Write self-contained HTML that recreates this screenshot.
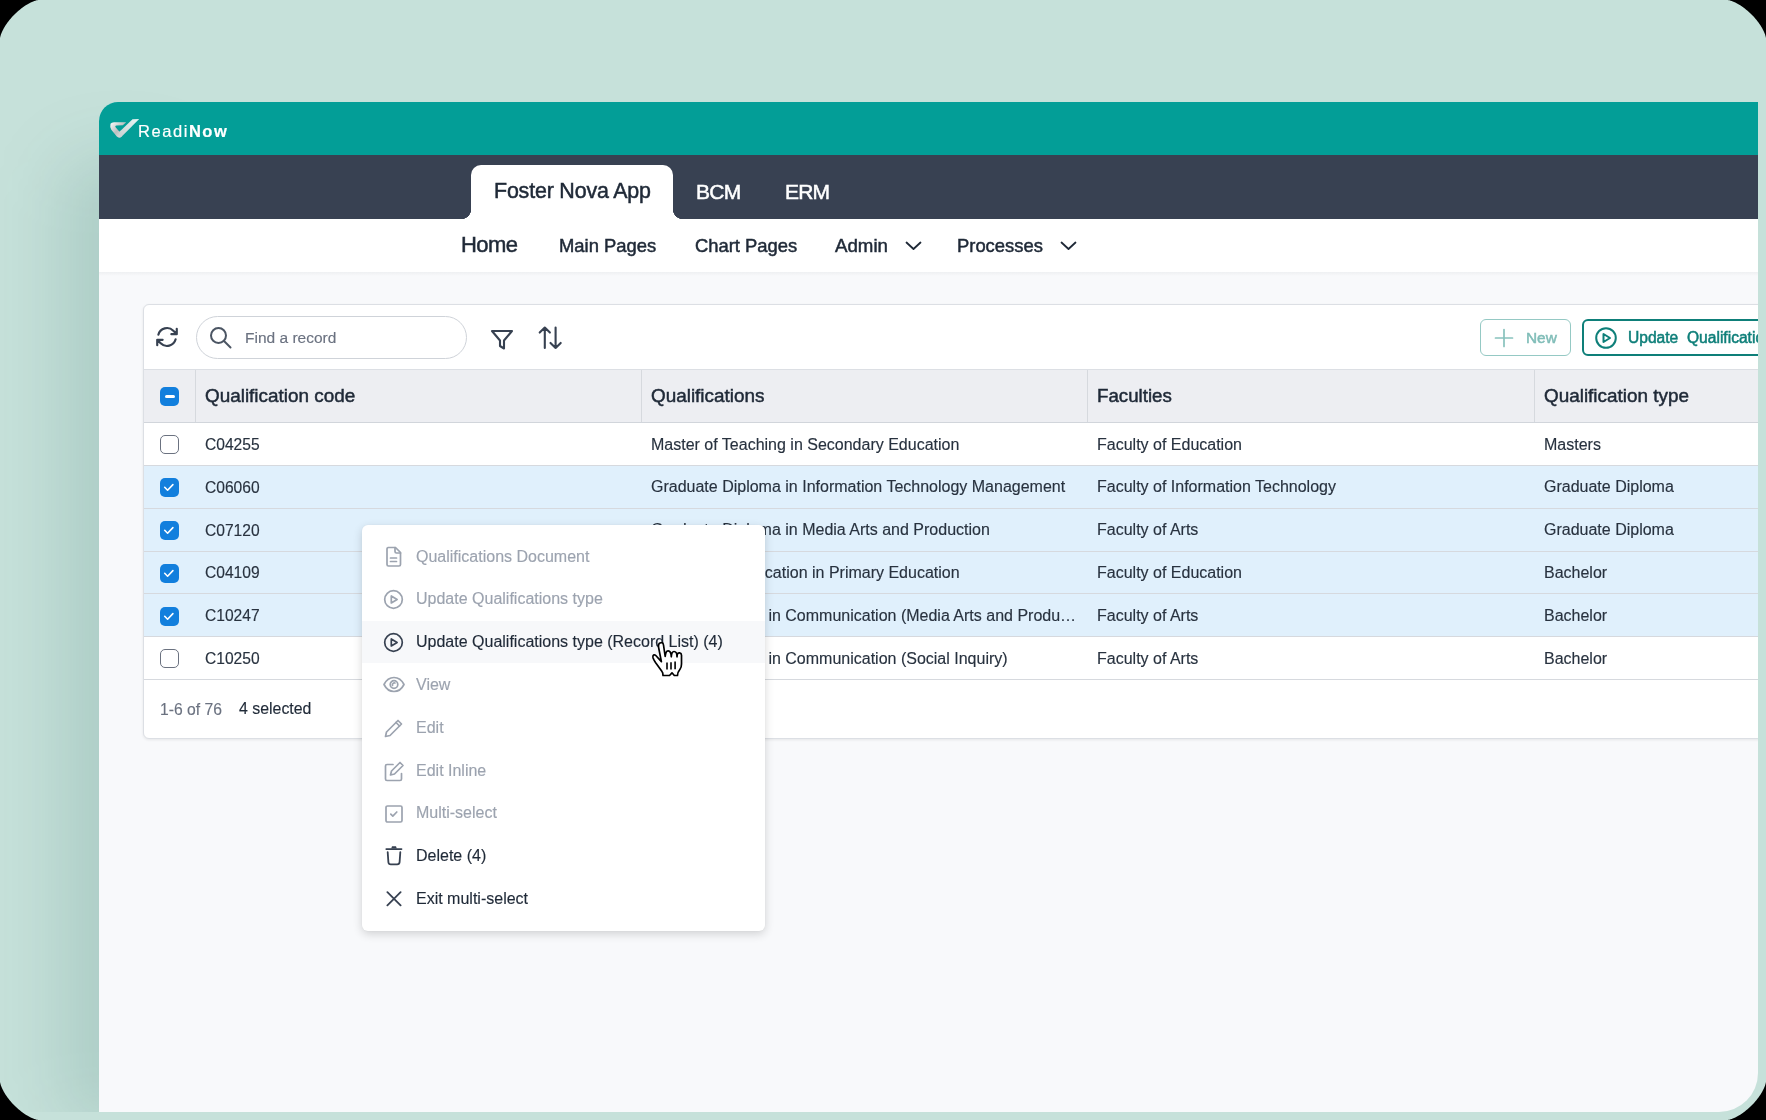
<!DOCTYPE html><html><head><meta charset="utf-8"><style>
html,body{margin:0;padding:0}
body{width:1766px;height:1120px;background:#000;overflow:hidden;position:relative;font-family:"Liberation Sans",sans-serif}
.frame{position:absolute;left:0;top:0;width:1766px;height:1120px;background:#c6e1da;overflow:hidden}
.win{position:absolute;left:99px;top:102px;width:1659px;height:1010px;border-radius:19px 0 39px 0;overflow:hidden;background:#f8f9fb;}
.pg{position:absolute;left:-99px;top:-102px;width:1766px;height:1120px}
.a{position:absolute}
.t{position:absolute;white-space:nowrap;will-change:transform}
</style></head><body><div class="frame"><div class="a" style="left:0;top:0;width:300px;height:1112px;overflow:hidden"><div class="a" style="left:62px;top:160px;width:120px;height:965px;border-radius:30px;background:rgba(0,70,60,.13);filter:blur(36px)"></div></div><div class="win"><div class="pg">

<div class="a" style="left:99px;top:102px;width:1659px;height:53px;background:#039e97"></div>
<svg class="a" style="left:109px;top:118px;" width="31" height="21" viewBox="0 0 31 21"><defs><linearGradient id="lg" x1="0" y1="0" x2="1" y2="1"><stop offset="0" stop-color="#ffffff"/><stop offset=".5" stop-color="#b9bfbf"/><stop offset="1" stop-color="#f2f2f2"/></linearGradient><linearGradient id="lg2" x1="0" y1="1" x2="1" y2="0"><stop offset="0" stop-color="#c9d0d0"/><stop offset="1" stop-color="#e6f6f5"/></linearGradient></defs>
<path d="M1.5 5.8 Q2.5 4.3 5 4.2 L17.2 4.2 L13.8 7.2 L7.5 7.4 Q5.5 7.6 6.8 9.5 L10.5 13.8 L12 12.4 L12.5 18.8 Q10 20.8 7.8 18.6 L2.3 11.8 Q0.6 9.5 1.5 5.8 Z" fill="url(#lg)"/>
<path d="M10.5 13.8 L23.5 1.2 L30.2 1 L12.5 18.8 Q11 19.6 10.2 18.5 Z" fill="url(#lg2)"/></svg>
<div class="t" style="left:138.00px;top:122.63px;font-size:16.5px;line-height:16.5px;color:#ffffff;font-weight:400;letter-spacing:1.55px;-webkit-text-stroke:0.2px #fff">Readi<b style="font-weight:700">Now</b></div>
<div class="a" style="left:99px;top:155px;width:1659px;height:64px;background:#384152"></div>
<div class="a" style="left:471px;top:165px;width:202px;height:54px;background:#fff;border-radius:10px 10px 0 0"></div>
<div class="a" style="left:461px;top:209px;width:10px;height:10px;background:radial-gradient(circle at 0 0, #384152 10px, #fff 10.5px)"></div>
<div class="a" style="left:673px;top:209px;width:10px;height:10px;background:radial-gradient(circle at 100% 0, #384152 10px, #fff 10.5px)"></div>
<div class="t" style="left:493.50px;top:180.88px;font-size:21.4px;line-height:21.4px;color:#1f2937;font-weight:400;-webkit-text-stroke:0.5px currentColor;letter-spacing:-0.17px;">Foster Nova App</div>
<div class="t" style="left:695.60px;top:181.22px;font-size:21px;line-height:21px;color:#fff;font-weight:400;-webkit-text-stroke:0.5px currentColor;letter-spacing:-0.7px;">BCM</div>
<div class="t" style="left:784.90px;top:181.22px;font-size:21px;line-height:21px;color:#fff;font-weight:400;-webkit-text-stroke:0.5px currentColor;letter-spacing:-0.8px;">ERM</div>
<div class="a" style="left:99px;top:219px;width:1659px;height:53px;background:#fff"></div>
<div class="a" style="left:99px;top:272px;width:1659px;height:4px;background:linear-gradient(#eef0f2,#f8f9fb)"></div>
<div class="t" style="left:461.00px;top:233.88px;font-size:22px;line-height:22px;color:#1f2937;font-weight:400;-webkit-text-stroke:0.5px currentColor;letter-spacing:-0.6px;">Home</div>
<div class="t" style="left:559.00px;top:236.92px;font-size:18.4px;line-height:18.4px;color:#1f2937;font-weight:400;-webkit-text-stroke:0.5px currentColor;">Main Pages</div>
<div class="t" style="left:694.60px;top:236.92px;font-size:18.4px;line-height:18.4px;color:#1f2937;font-weight:400;-webkit-text-stroke:0.5px currentColor;">Chart Pages</div>
<div class="t" style="left:835.30px;top:236.67px;font-size:18.7px;line-height:18.7px;color:#1f2937;font-weight:400;-webkit-text-stroke:0.5px currentColor;">Admin</div>
<div class="t" style="left:957.30px;top:236.92px;font-size:18.4px;line-height:18.4px;color:#1f2937;font-weight:400;-webkit-text-stroke:0.5px currentColor;">Processes</div>
<svg class="a" style="left:905px;top:241px;" width="17" height="10" viewBox="0 0 17 10"><path d="M1.5 1.5 L8.5 8 L15.5 1.5" fill="none" stroke="#1f2937" stroke-width="1.8" stroke-linecap="round" stroke-linejoin="round"/></svg>
<svg class="a" style="left:1060px;top:241px;" width="17" height="10" viewBox="0 0 17 10"><path d="M1.5 1.5 L8.5 8 L15.5 1.5" fill="none" stroke="#1f2937" stroke-width="1.8" stroke-linecap="round" stroke-linejoin="round"/></svg>
<div class="a" style="left:143px;top:304px;width:1757px;height:435px;background:#fff;border:1px solid #dcdfe4;border-radius:6px;box-sizing:border-box;box-shadow:0 1px 3px rgba(0,0,0,.08)"></div>
<svg class="a" style="left:154.2px;top:324.4px;" width="26" height="26" viewBox="0 0 24 24"><path d="M16.023 9.348h4.992v-.001M2.985 19.644v-4.992m0 0h4.992m-4.993 0 3.181 3.183a8.25 8.25 0 0 0 13.803-3.7M4.031 9.865a8.25 8.25 0 0 1 13.803-3.7l3.181 3.182m0-4.991v4.99" fill="none" stroke="#374151" stroke-width="2" stroke-linecap="round" stroke-linejoin="round"/></svg>
<div class="a" style="left:196px;top:316px;width:271px;height:43px;border:1.2px solid #cfd3d9;border-radius:22px;box-sizing:border-box;background:#fff"></div>
<svg class="a" style="left:208px;top:325px;" width="26" height="26" viewBox="0 0 26 26"><g fill="none" stroke="#4b5563" stroke-width="2" stroke-linecap="round"><circle cx="10.5" cy="10.5" r="7.5"/><path d="M16 16l6.5 6.5"/></g></svg>
<div class="t" style="left:245.30px;top:329.88px;font-size:15.5px;line-height:15.5px;color:#6b7280;font-weight:400;-webkit-text-stroke:0.15px currentColor;">Find a record</div>
<svg class="a" style="left:489px;top:328.6px;" width="26" height="22" viewBox="0 0 26 22"><path d="M3 2h20l-8 9.5v8l-4 -2.5v-5.5z" fill="none" stroke="#374151" stroke-width="2.1" stroke-linecap="round" stroke-linejoin="round"/></svg>
<svg class="a" style="left:537px;top:325px;" width="27" height="25" viewBox="0 0 27 25"><g fill="none" stroke="#374151" stroke-width="2.1" stroke-linecap="round" stroke-linejoin="round"><path d="M7.8 23V2.5M2.7 7.6L7.8 2.5l5.1 5.1M18.6 2.5V23M13.5 17.9l5.1 5.1 5.1-5.1"/></g></svg>
<div class="a" style="left:1480px;top:319px;width:91px;height:37px;border:1.5px solid #95c9c4;border-radius:6px;box-sizing:border-box"></div>
<svg class="a" style="left:1493px;top:327px;" width="22" height="22" viewBox="0 0 22 22"><path d="M11 2.5v17M2.5 11h17" stroke="#88c2bd" stroke-width="1.7" stroke-linecap="round"/></svg>
<div class="t" style="left:1526.20px;top:329.56px;font-size:15.4px;line-height:15.4px;color:#80bdb8;font-weight:400;-webkit-text-stroke:0.5px currentColor;">New</div>
<div class="a" style="left:1582px;top:319px;width:218px;height:37px;border:2px solid #0e7f79;border-radius:6px;box-sizing:border-box"></div>
<svg class="a" style="left:1594px;top:326px;" width="24" height="24" viewBox="0 0 24 24"><g fill="none" stroke="#0e7f79" stroke-width="2" stroke-linejoin="round"><circle cx="12" cy="12" r="9.8"/><path d="M9.5 8v8l6.5-4z"/></g></svg>
<div class="t" style="left:1628.40px;top:329.79px;font-size:15.6px;line-height:15.6px;color:#0e7f79;font-weight:400;-webkit-text-stroke:0.5px currentColor;">Update&nbsp; Qualifications type</div>
<div class="a" style="left:144px;top:369px;width:1614px;height:54px;background:#edeef2;border-top:1px solid #dcdfe4;border-bottom:1px solid #d1d5db;box-sizing:border-box"></div>
<div class="a" style="left:195px;top:370px;width:1px;height:52px;background:#d6d9de"></div>
<div class="a" style="left:641px;top:370px;width:1px;height:52px;background:#d6d9de"></div>
<div class="a" style="left:1087px;top:370px;width:1px;height:52px;background:#d6d9de"></div>
<div class="a" style="left:1534px;top:370px;width:1px;height:52px;background:#d6d9de"></div>
<div class="a" style="left:160px;top:387px;width:19px;height:19px;border-radius:5px;background:#127fdd"></div>
<div class="a" style="left:164.5px;top:395px;width:10.0px;height:3px;background:#fff;border-radius:2px"></div>
<div class="t" style="left:204.50px;top:386.60px;font-size:18.9px;line-height:18.9px;color:#1f2937;font-weight:400;-webkit-text-stroke:0.5px currentColor;">Qualification code</div>
<div class="t" style="left:650.90px;top:386.60px;font-size:18.9px;line-height:18.9px;color:#1f2937;font-weight:400;-webkit-text-stroke:0.5px currentColor;">Qualifications</div>
<div class="t" style="left:1097.20px;top:386.77px;font-size:18.7px;line-height:18.7px;color:#1f2937;font-weight:400;-webkit-text-stroke:0.5px currentColor;">Faculties</div>
<div class="t" style="left:1543.70px;top:386.60px;font-size:18.9px;line-height:18.9px;color:#1f2937;font-weight:400;-webkit-text-stroke:0.5px currentColor;">Qualification type</div>
<div class="a" style="left:144px;top:423px;width:1614px;height:43px;background:#fff;border-bottom:1px solid #d6d9de;box-sizing:border-box"></div>
<div class="a" style="left:160px;top:435.3px;width:19px;height:19px;border-radius:5px;border:1.8px solid #6b7280;box-sizing:border-box;background:#fff"></div>
<div class="t" style="left:204.50px;top:436.99px;font-size:15.6px;line-height:15.6px;color:#28323f;font-weight:400;-webkit-text-stroke:0.15px currentColor;">C04255</div>
<div class="t" style="left:650.90px;top:436.66px;font-size:16px;line-height:16px;color:#28323f;font-weight:400;-webkit-text-stroke:0.15px currentColor;">Master of Teaching in Secondary Education</div>
<div class="t" style="left:1097.20px;top:436.66px;font-size:16px;line-height:16px;color:#28323f;font-weight:400;-webkit-text-stroke:0.15px currentColor;">Faculty of Education</div>
<div class="t" style="left:1543.70px;top:436.66px;font-size:16px;line-height:16px;color:#28323f;font-weight:400;-webkit-text-stroke:0.15px currentColor;">Masters</div>
<div class="a" style="left:144px;top:466px;width:1614px;height:43px;background:#e0f0fc;border-bottom:1px solid #d6d9de;box-sizing:border-box"></div>
<div class="a" style="left:160px;top:478.1px;width:19px;height:19px;border-radius:5px;background:#127fdd"></div>
<svg class="a" style="left:160px;top:478.1px;" width="19" height="19" viewBox="0 0 19 19"><path d="M4.7 9.3L7.6 12.2L12.9 6.6" fill="none" stroke="#fff" stroke-width="1.6" stroke-linecap="round" stroke-linejoin="round"/></svg>
<div class="t" style="left:204.50px;top:479.79px;font-size:15.6px;line-height:15.6px;color:#28323f;font-weight:400;-webkit-text-stroke:0.15px currentColor;">C06060</div>
<div class="t" style="left:650.90px;top:479.46px;font-size:16px;line-height:16px;color:#28323f;font-weight:400;-webkit-text-stroke:0.15px currentColor;">Graduate Diploma in Information Technology Management</div>
<div class="t" style="left:1097.20px;top:479.46px;font-size:16px;line-height:16px;color:#28323f;font-weight:400;-webkit-text-stroke:0.15px currentColor;">Faculty of Information Technology</div>
<div class="t" style="left:1543.70px;top:479.46px;font-size:16px;line-height:16px;color:#28323f;font-weight:400;-webkit-text-stroke:0.15px currentColor;">Graduate Diploma</div>
<div class="a" style="left:144px;top:509px;width:1614px;height:43px;background:#e0f0fc;border-bottom:1px solid #d6d9de;box-sizing:border-box"></div>
<div class="a" style="left:160px;top:520.9px;width:19px;height:19px;border-radius:5px;background:#127fdd"></div>
<svg class="a" style="left:160px;top:520.9px;" width="19" height="19" viewBox="0 0 19 19"><path d="M4.7 9.3L7.6 12.2L12.9 6.6" fill="none" stroke="#fff" stroke-width="1.6" stroke-linecap="round" stroke-linejoin="round"/></svg>
<div class="t" style="left:204.50px;top:522.59px;font-size:15.6px;line-height:15.6px;color:#28323f;font-weight:400;-webkit-text-stroke:0.15px currentColor;">C07120</div>
<div class="t" style="left:650.90px;top:522.26px;font-size:16px;line-height:16px;color:#28323f;font-weight:400;-webkit-text-stroke:0.15px currentColor;">Graduate Diploma in Media Arts and Production</div>
<div class="t" style="left:1097.20px;top:522.26px;font-size:16px;line-height:16px;color:#28323f;font-weight:400;-webkit-text-stroke:0.15px currentColor;">Faculty of Arts</div>
<div class="t" style="left:1543.70px;top:522.26px;font-size:16px;line-height:16px;color:#28323f;font-weight:400;-webkit-text-stroke:0.15px currentColor;">Graduate Diploma</div>
<div class="a" style="left:144px;top:552px;width:1614px;height:42px;background:#e0f0fc;border-bottom:1px solid #d6d9de;box-sizing:border-box"></div>
<div class="a" style="left:160px;top:563.7px;width:19px;height:19px;border-radius:5px;background:#127fdd"></div>
<svg class="a" style="left:160px;top:563.7px;" width="19" height="19" viewBox="0 0 19 19"><path d="M4.7 9.3L7.6 12.2L12.9 6.6" fill="none" stroke="#fff" stroke-width="1.6" stroke-linecap="round" stroke-linejoin="round"/></svg>
<div class="t" style="left:204.50px;top:565.39px;font-size:15.6px;line-height:15.6px;color:#28323f;font-weight:400;-webkit-text-stroke:0.15px currentColor;">C04109</div>
<div class="t" style="left:650.90px;top:565.06px;font-size:16px;line-height:16px;color:#28323f;font-weight:400;-webkit-text-stroke:0.15px currentColor;">Bachelor of Education in Primary Education</div>
<div class="t" style="left:1097.20px;top:565.06px;font-size:16px;line-height:16px;color:#28323f;font-weight:400;-webkit-text-stroke:0.15px currentColor;">Faculty of Education</div>
<div class="t" style="left:1543.70px;top:565.06px;font-size:16px;line-height:16px;color:#28323f;font-weight:400;-webkit-text-stroke:0.15px currentColor;">Bachelor</div>
<div class="a" style="left:144px;top:594px;width:1614px;height:43px;background:#e0f0fc;border-bottom:1px solid #d6d9de;box-sizing:border-box"></div>
<div class="a" style="left:160px;top:606.5px;width:19px;height:19px;border-radius:5px;background:#127fdd"></div>
<svg class="a" style="left:160px;top:606.5px;" width="19" height="19" viewBox="0 0 19 19"><path d="M4.7 9.3L7.6 12.2L12.9 6.6" fill="none" stroke="#fff" stroke-width="1.6" stroke-linecap="round" stroke-linejoin="round"/></svg>
<div class="t" style="left:204.50px;top:608.19px;font-size:15.6px;line-height:15.6px;color:#28323f;font-weight:400;-webkit-text-stroke:0.15px currentColor;">C10247</div>
<div class="t" style="left:650.90px;top:607.86px;font-size:16px;line-height:16px;color:#28323f;font-weight:400;-webkit-text-stroke:0.15px currentColor;">Bachelor of Arts in Communication (Media Arts and Produ…</div>
<div class="t" style="left:1097.20px;top:607.86px;font-size:16px;line-height:16px;color:#28323f;font-weight:400;-webkit-text-stroke:0.15px currentColor;">Faculty of Arts</div>
<div class="t" style="left:1543.70px;top:607.86px;font-size:16px;line-height:16px;color:#28323f;font-weight:400;-webkit-text-stroke:0.15px currentColor;">Bachelor</div>
<div class="a" style="left:144px;top:637px;width:1614px;height:43px;background:#fff;border-bottom:1px solid #d6d9de;box-sizing:border-box"></div>
<div class="a" style="left:160px;top:649.3px;width:19px;height:19px;border-radius:5px;border:1.8px solid #6b7280;box-sizing:border-box;background:#fff"></div>
<div class="t" style="left:204.50px;top:650.99px;font-size:15.6px;line-height:15.6px;color:#28323f;font-weight:400;-webkit-text-stroke:0.15px currentColor;">C10250</div>
<div class="t" style="left:650.90px;top:650.66px;font-size:16px;line-height:16px;color:#28323f;font-weight:400;-webkit-text-stroke:0.15px currentColor;">Bachelor of Arts in Communication (Social Inquiry)</div>
<div class="t" style="left:1097.20px;top:650.66px;font-size:16px;line-height:16px;color:#28323f;font-weight:400;-webkit-text-stroke:0.15px currentColor;">Faculty of Arts</div>
<div class="t" style="left:1543.70px;top:650.66px;font-size:16px;line-height:16px;color:#28323f;font-weight:400;-webkit-text-stroke:0.15px currentColor;">Bachelor</div>
<div class="t" style="left:159.50px;top:701.61px;font-size:15.7px;line-height:15.7px;color:#6b7280;font-weight:400;-webkit-text-stroke:0.15px currentColor;">1-6 of 76</div>
<div class="t" style="left:239.20px;top:701.44px;font-size:15.9px;line-height:15.9px;color:#1f2937;font-weight:400;-webkit-text-stroke:0.15px currentColor;">4 selected</div>
<div class="a" style="left:362px;top:525px;width:403px;height:406px;background:#fff;border-radius:6px;box-shadow:0 3px 10px rgba(0,0,0,.16), 0 0 2px rgba(0,0,0,.06)"></div>
<div class="a" style="left:362px;top:621px;width:403px;height:42px;background:#f7f8fa"></div>
<div class="t" style="left:415.70px;top:548.66px;font-size:16px;line-height:16px;color:#9ca3af;font-weight:400;-webkit-text-stroke:0.15px currentColor;">Qualifications Document</div>
<div class="t" style="left:415.70px;top:591.43px;font-size:16px;line-height:16px;color:#9ca3af;font-weight:400;-webkit-text-stroke:0.15px currentColor;">Update Qualifications type</div>
<div class="t" style="left:415.70px;top:634.20px;font-size:16px;line-height:16px;color:#1f2937;font-weight:400;-webkit-text-stroke:0.15px currentColor;">Update Qualifications type (Record List) (4)</div>
<div class="t" style="left:415.70px;top:676.97px;font-size:16px;line-height:16px;color:#9ca3af;font-weight:400;-webkit-text-stroke:0.15px currentColor;">View</div>
<div class="t" style="left:415.70px;top:719.74px;font-size:16px;line-height:16px;color:#9ca3af;font-weight:400;-webkit-text-stroke:0.15px currentColor;">Edit</div>
<div class="t" style="left:415.70px;top:762.51px;font-size:16px;line-height:16px;color:#9ca3af;font-weight:400;-webkit-text-stroke:0.15px currentColor;">Edit Inline</div>
<div class="t" style="left:415.70px;top:805.28px;font-size:16px;line-height:16px;color:#9ca3af;font-weight:400;-webkit-text-stroke:0.15px currentColor;">Multi-select</div>
<div class="t" style="left:415.70px;top:848.05px;font-size:16px;line-height:16px;color:#1f2937;font-weight:400;-webkit-text-stroke:0.15px currentColor;">Delete (4)</div>
<div class="t" style="left:415.70px;top:890.82px;font-size:16px;line-height:16px;color:#1f2937;font-weight:400;-webkit-text-stroke:0.15px currentColor;">Exit multi-select</div>
<svg class="a" style="left:384px;top:545px;" width="20" height="23" viewBox="0 0 20 23"><g fill="none" stroke="#9ca3af" stroke-width="1.7" stroke-linecap="round" stroke-linejoin="round"><path d="M4 2.5h7.5l5 5v12a1.5 1.5 0 0 1-1.5 1.5H4.5A1.5 1.5 0 0 1 3 19.5v-15.5A1.5 1.5 0 0 1 4.5 2.5z"/><path d="M11 2.5v4a1.5 1.5 0 0 0 1.5 1.5h4M6.5 13h6M6.5 16.5h6"/></g></svg>
<svg class="a" style="left:383px;top:588.5px;" width="21" height="21" viewBox="0 0 21 21"><g fill="none" stroke="#9ca3af" stroke-width="1.7" stroke-linecap="round" stroke-linejoin="round"><circle cx="10.5" cy="10.5" r="8.8"/><path d="M8.3 7v7l5.8-3.5z"/></g></svg>
<svg class="a" style="left:383px;top:631.5px;" width="21" height="21" viewBox="0 0 21 21"><g fill="none" stroke="#374151" stroke-width="1.7" stroke-linecap="round" stroke-linejoin="round"><circle cx="10.5" cy="10.5" r="8.8"/><path d="M8.3 7v7l5.8-3.5z"/></g></svg>
<svg class="a" style="left:382px;top:674px;" width="24" height="21" viewBox="0 0 24 21"><g fill="none" stroke="#9ca3af" stroke-width="1.7" stroke-linecap="round" stroke-linejoin="round"><path d="M2 10.5C4.5 5.5 8 3.5 12 3.5s7.5 2 10 7c-2.5 5-6 7-10 7s-7.5-2-10-7z"/><circle cx="12" cy="10.5" r="3.8"/><path d="M10.5 11.5a2 2 0 0 1 2.5-2.5"/></g></svg>
<svg class="a" style="left:383px;top:717px;" width="22" height="22" viewBox="0 0 22 22"><g fill="none" stroke="#9ca3af" stroke-width="1.7" stroke-linecap="round" stroke-linejoin="round"><path d="M15 3.5l3.5 3.5L7 18.5 2.5 19.5 3.5 15z"/><path d="M13 5.5l3.5 3.5"/></g></svg>
<svg class="a" style="left:383px;top:760px;" width="22" height="22" viewBox="0 0 22 22"><g fill="none" stroke="#9ca3af" stroke-width="1.7" stroke-linecap="round" stroke-linejoin="round"><path d="M10 4.5H4A1.5 1.5 0 0 0 2.5 6v13A1.5 1.5 0 0 0 4 20.5h13a1.5 1.5 0 0 0 1.5-1.5v-5.5"/><path d="M17 2.5l3 3-8.5 8.5-4 1 1-4z"/></g></svg>
<svg class="a" style="left:384px;top:804px;" width="20" height="20" viewBox="0 0 20 20"><g fill="none" stroke="#9ca3af" stroke-width="1.7" stroke-linecap="round" stroke-linejoin="round"><rect x="2" y="2" width="16" height="16" rx="1.5"/><path d="M6.8 10.2l2 2 4-4.2"/></g></svg>
<svg class="a" style="left:384px;top:845px;" width="20" height="22" viewBox="0 0 20 22"><g fill="none" stroke="#374151" stroke-width="1.8" stroke-linecap="round" stroke-linejoin="round"><path d="M2.3 4.1H17.5M3.7 7.2L4.4 17.2Q4.6 19.4 6.8 19.4H13.2Q15.4 19.4 15.6 17.2L16.3 7.2"/></g><path d="M7.2 3.4L8 1.3H12L12.8 3.4Z" fill="#374151"/></svg>
<svg class="a" style="left:385px;top:891px;" width="18" height="18" viewBox="0 0 18 18"><path d="M2.4 1.2L15.6 14.4M15.6 1.2L2.4 14.4" fill="none" stroke="#374151" stroke-width="1.8" stroke-linecap="round"/></svg>
<svg class="a" style="left:640px;top:630px;" width="60" height="60" viewBox="0 0 60 60"><path d="M21.4 31.6 L15.8 25.5 C14.3 24 12.3 25 13 27.8 C13.5 29.5 14.5 31 15.5 32.5 L22 41.5 C22.8 42.5 23 43.5 23 45.5 L29.5 45.5 L32 42.8 L34.3 45.5 L37.5 45.5 C37.5 43 38.5 41 40 39.2 C41 38 41.5 36 41.5 34 L41.5 25.2 C41.5 22.6 38 22 37.3 24.5 L37 26.8 C37 23.5 36 21.5 34 21.5 C32 21.5 31.5 23.5 31.3 26.8 C31.2 23 30 20.5 27.8 20.8 C26 21 25.6 23 25.2 26.5 L23.5 15 C23 12 21.5 12.5 20 13 C18.5 13.5 18.3 15 18.5 17 Z" fill="#fff" stroke="#000" stroke-width="1.7" stroke-linejoin="round"/>
<path d="M27 32.5V39.5M31 32.2V39.5M35.1 31.5V39.2" stroke="#000" stroke-width="1.6"/></svg>
</div></div></div>
<svg class="a" style="left:0;top:0" width="1766" height="1120" viewBox="0 0 1766 1120"><path d="M0 0 L0.00 38.50 L0.04 38.03 L0.16 37.29 L0.36 36.41 L0.64 35.41 L1.00 34.33 L1.44 33.18 L1.95 31.97 L2.54 30.71 L3.20 29.41 L3.93 28.08 L4.73 26.72 L5.59 25.35 L6.52 23.97 L7.51 22.58 L8.55 21.20 L9.64 19.82 L10.79 18.45 L11.98 17.10 L13.21 15.77 L14.47 14.47 L15.77 13.21 L17.10 11.98 L18.45 10.79 L19.82 9.64 L21.20 8.55 L22.58 7.51 L23.97 6.52 L25.35 5.59 L26.72 4.73 L28.08 3.93 L29.41 3.20 L30.71 2.54 L31.97 1.95 L33.18 1.44 L34.33 1.00 L35.41 0.64 L36.41 0.36 L37.29 0.16 L38.03 0.04 L38.50 0.00 Z" fill="#000"/><path d="M1766 0 L1766.00 38.50 L1765.96 38.03 L1765.84 37.29 L1765.64 36.41 L1765.36 35.41 L1765.00 34.33 L1764.56 33.18 L1764.05 31.97 L1763.46 30.71 L1762.80 29.41 L1762.07 28.08 L1761.27 26.72 L1760.41 25.35 L1759.48 23.97 L1758.49 22.58 L1757.45 21.20 L1756.36 19.82 L1755.21 18.45 L1754.02 17.10 L1752.79 15.77 L1751.53 14.47 L1750.23 13.21 L1748.90 11.98 L1747.55 10.79 L1746.18 9.64 L1744.80 8.55 L1743.42 7.51 L1742.03 6.52 L1740.65 5.59 L1739.28 4.73 L1737.92 3.93 L1736.59 3.20 L1735.29 2.54 L1734.03 1.95 L1732.82 1.44 L1731.67 1.00 L1730.59 0.64 L1729.59 0.36 L1728.71 0.16 L1727.97 0.04 L1727.50 0.00 Z" fill="#000"/><path d="M0 1120 L0.00 1081.50 L0.04 1081.97 L0.16 1082.71 L0.36 1083.59 L0.64 1084.59 L1.00 1085.67 L1.44 1086.82 L1.95 1088.03 L2.54 1089.29 L3.20 1090.59 L3.93 1091.92 L4.73 1093.28 L5.59 1094.65 L6.52 1096.03 L7.51 1097.42 L8.55 1098.80 L9.64 1100.18 L10.79 1101.55 L11.98 1102.90 L13.21 1104.23 L14.47 1105.53 L15.77 1106.79 L17.10 1108.02 L18.45 1109.21 L19.82 1110.36 L21.20 1111.45 L22.58 1112.49 L23.97 1113.48 L25.35 1114.41 L26.72 1115.27 L28.08 1116.07 L29.41 1116.80 L30.71 1117.46 L31.97 1118.05 L33.18 1118.56 L34.33 1119.00 L35.41 1119.36 L36.41 1119.64 L37.29 1119.84 L38.03 1119.96 L38.50 1120.00 Z" fill="#000"/><path d="M1766 1120 L1766.00 1081.50 L1765.96 1081.97 L1765.84 1082.71 L1765.64 1083.59 L1765.36 1084.59 L1765.00 1085.67 L1764.56 1086.82 L1764.05 1088.03 L1763.46 1089.29 L1762.80 1090.59 L1762.07 1091.92 L1761.27 1093.28 L1760.41 1094.65 L1759.48 1096.03 L1758.49 1097.42 L1757.45 1098.80 L1756.36 1100.18 L1755.21 1101.55 L1754.02 1102.90 L1752.79 1104.23 L1751.53 1105.53 L1750.23 1106.79 L1748.90 1108.02 L1747.55 1109.21 L1746.18 1110.36 L1744.80 1111.45 L1743.42 1112.49 L1742.03 1113.48 L1740.65 1114.41 L1739.28 1115.27 L1737.92 1116.07 L1736.59 1116.80 L1735.29 1117.46 L1734.03 1118.05 L1732.82 1118.56 L1731.67 1119.00 L1730.59 1119.36 L1729.59 1119.64 L1728.71 1119.84 L1727.97 1119.96 L1727.50 1120.00 Z" fill="#000"/></svg>
</body></html>
